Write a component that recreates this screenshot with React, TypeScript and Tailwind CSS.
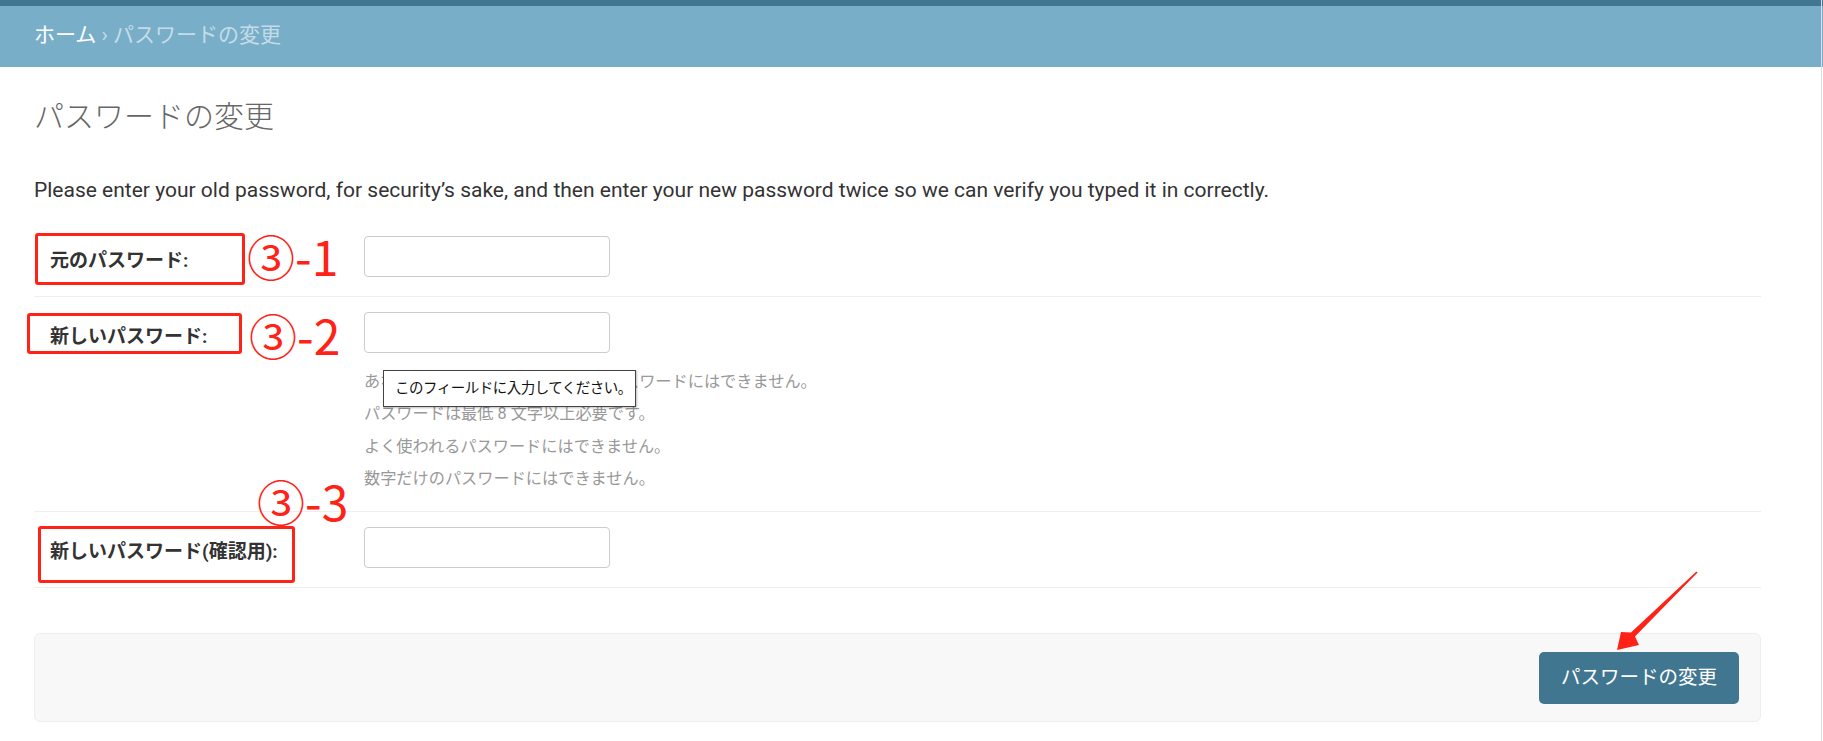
const helpLines = [
  'あなたの他の個人情報と似ているパスワードにはできません。',
  'パスワードは最低 8 文字以上必要です。',
  'よく使われるパスワードにはできません。',
  '数字だけのパスワードにはできません。',
];

function Field({ label, help }: { label: string; help?: string[] }) {
  return (
    <div className="border-b border-[#eeeeee] pl-[16px] pt-[15px] pb-[19px] first:pt-[16px]">
      <div className="flex">
        <label className="w-[314px] shrink-0 mt-[12px] text-[19px] leading-[25px] font-bold text-[#333]">{label}</label>
        <input type="password" className="w-[246px] h-[41px] border border-[#cccccc] rounded-[4px] bg-white" />
      </div>
      {help && (
        <div className="pl-[314px] mt-[13px] -mb-[3px] text-[16.2px] leading-[32.3px] text-[#999]">
          {help.map((line) => (
            <div key={line}>{line}</div>
          ))}
        </div>
      )}
    </div>
  );
}

export default function App() {
  return (
    <div className="relative w-full h-[741px] overflow-hidden bg-white font-[Roboto,'Noto_Sans_CJK_JP',sans-serif]">
      <div className="h-[6px] bg-[#417690]" />
      <div className="h-[61px] bg-[#79aec8] pl-[34px] pt-[17px] text-[21px] leading-[24px] text-[#c4dce8]">
        <span className="text-white">ホーム</span> › パスワードの変更
      </div>

      <main className="pl-[34px] pr-[62px]">
        <h1 className="mt-[32px] text-[30px] leading-[36px] font-light text-[#666]">パスワードの変更</h1>
        <p className="mt-[42px] text-[21px] leading-[26px] text-[#333]">
          Please enter your old password, for security’s sake, and then enter your new password twice so we can verify you typed it in correctly.
        </p>

        <div className="mt-[17px]">
          <Field label="元のパスワード:" />
          <Field label="新しいパスワード:" help={helpLines} />
          <Field label="新しいパスワード(確認用):" />
        </div>

        <div className="mt-[45px] h-[89px] flex items-center justify-end pr-[21px] bg-[#f8f8f8] border border-[#eeeeee] rounded-[6px]">
          <button className="w-[200px] h-[52px] rounded-[5px] bg-[#417690] text-white text-[19.5px]">パスワードの変更</button>
        </div>
      </main>

      {/* annotation overlays */}
      <div className="absolute left-[35px] top-[233px] w-[210px] h-[52px] border-[3px] border-[#ff2216] rounded-[3px]" />
      <div className="absolute left-[27px] top-[313px] w-[215px] h-[41px] border-[3px] border-[#ff2216] rounded-[3px]" />
      <div className="absolute left-[38px] top-[526px] w-[257px] h-[57px] border-[3px] border-[#ff2216] rounded-[3px]" />

      <div className="absolute left-[247px] top-[231px] text-[48px] leading-[48px] text-[#ff2216] font-['Noto_Sans_CJK_JP',sans-serif]">③-1</div>
      <div className="absolute left-[249px] top-[310px] text-[48px] leading-[48px] text-[#ff2216] font-['Noto_Sans_CJK_JP',sans-serif]">③-2</div>
      <div className="absolute left-[257px] top-[476px] text-[48px] leading-[48px] text-[#ff2216] font-['Noto_Sans_CJK_JP',sans-serif]">③-3</div>

      <div className="absolute left-[383px] top-[370px] w-[253px] h-[37px] bg-white border border-[#444] shadow-[1px_1px_2px_rgba(0,0,0,0.25)] pl-[11px] flex items-center whitespace-nowrap text-[14.5px] tracking-[-0.5px] text-[#111]">
        このフィールドに入力してください。
      </div>

      <div className="absolute right-[1px] top-0 w-px h-full bg-[#dddddd]" />

      <svg className="absolute inset-0 pointer-events-none" width="1823" height="741" viewBox="0 0 1823 741">
        <polygon
          points="1696.4,571.4 1697.6,572.6 1635,636.6 1639,645 1617,650 1621,632 1631,632.6"
          fill="#ff2216"
        />
      </svg>
    </div>
  );
}
